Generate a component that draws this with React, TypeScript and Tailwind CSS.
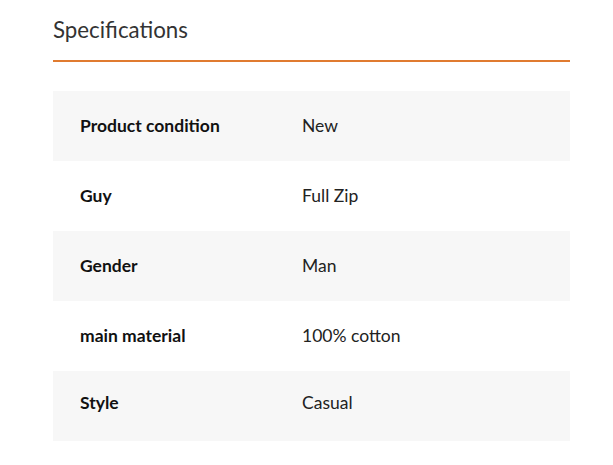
import React from "react";

const rows: [string, string][] = [
  ["Product condition", "New"],
  ["Guy", "Full Zip"],
  ["Gender", "Man"],
  ["main material", "100% cotton"],
  ["Style", "Casual"],
];

export default function App() {
  return (
    <div className="bg-white w-[613px] h-[465px] pl-[53px] pr-[43px] pt-[15px]" style={{ fontFamily: "Lato, 'Open Sans', sans-serif" }}>
      <h2 className="text-[22.3px] leading-[30px] text-[#333] font-normal pb-[15px] border-b-2 border-[#e07b30]">
        Specifications
      </h2>
      <div className="mt-[29px] flex flex-col">
        {rows.map(([k, v], i) => (
          <div
            key={k}
            className={`flex items-center h-[70px] ${i % 2 === 0 ? "bg-[#f7f7f7]" : "bg-white"} ${i === rows.length - 1 ? "pb-[6px]" : ""}`}
          >
            <div className="w-[249px] pl-[27px] text-[17.5px] font-bold text-[#111]">{k}</div>
            <div className="text-[17.5px] text-[#222]">{v}</div>
          </div>
        ))}
      </div>
    </div>
  );
}
